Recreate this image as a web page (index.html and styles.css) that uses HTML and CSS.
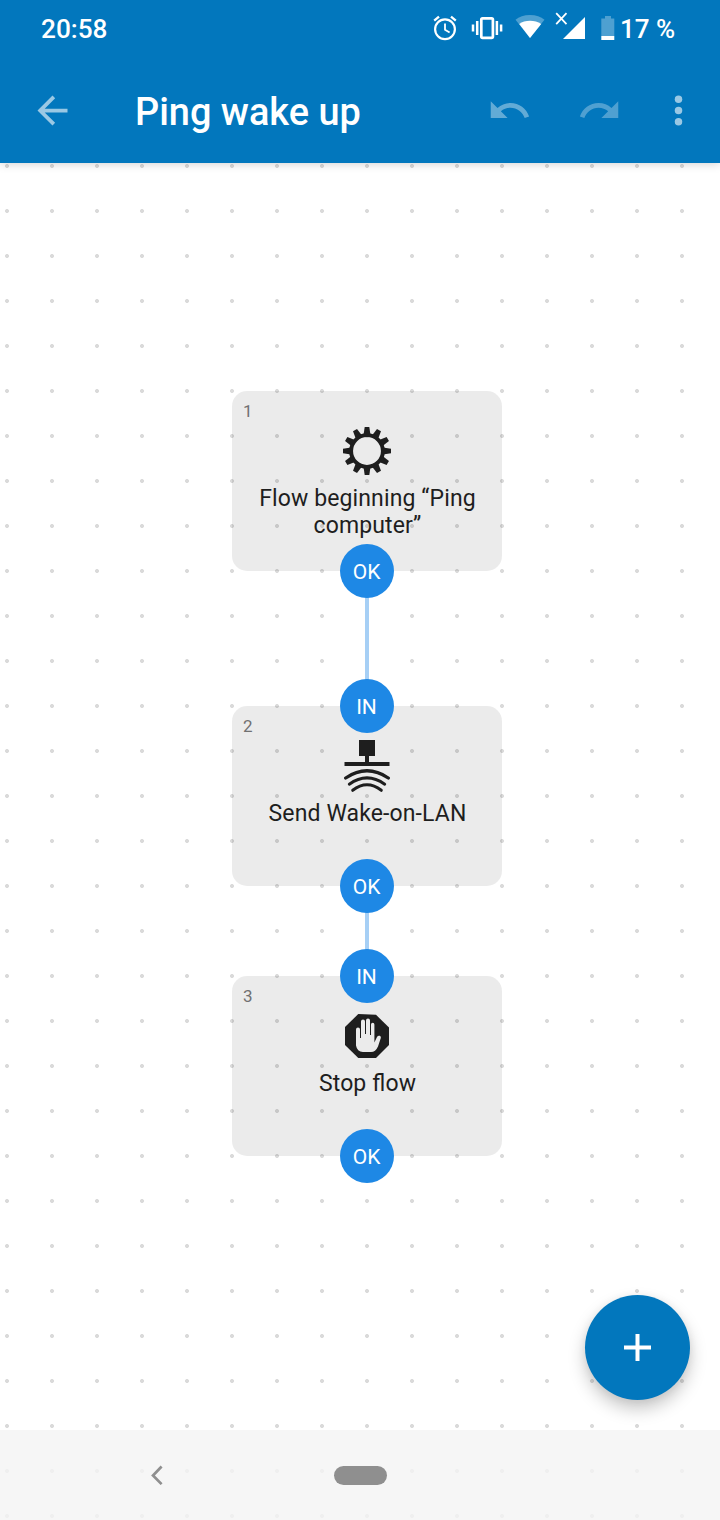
FILE: index.html
```html
<!DOCTYPE html>
<html lang="en">
<head>
<meta charset="utf-8">
<title>Ping wake up</title>
<link rel="stylesheet" href="styles.css">
</head>
<body>
<div class="screen">
  <header class="header">
    <div class="status">
      <span class="clock">20:58</span>
      <div class="indicators">
        <svg class="alarm" width="24" height="26" viewBox="0 0 24 26" fill="none" stroke="#fff" stroke-width="2.2"><circle cx="12" cy="14.2" r="9.9"/><path d="M12 8.5v6.2l4.6 2.8" stroke-width="1.8"/><path d="M1.2 5.7L6 1.6M22.8 5.7L18 1.6" stroke-width="2.3"/></svg>
        <svg class="vibrate" width="32" height="24" viewBox="0 0 32 24" fill="none" stroke="#fff" stroke-width="2.7"><rect x="10.3" y="2.3" width="11.6" height="19.6" rx="1.3"/><path d="M6.2 5v14M2 8.5v7M25.9 5v14M30.1 8.5v7" stroke-width="2.5"/></svg>
        <svg class="wifi" width="30" height="24" viewBox="0 0 30 24"><path d="M15 24L.5 5.7C4 2.8 9 1 15 1s11 1.8 14.500 4.700z" fill="#fff" opacity=".3"/><path d="M15 24L4.200 10C7 8 11 6.800 15 6.800S23 8 26.200 10z" fill="#fff"/></svg>
        <svg class="signal" width="32" height="28" viewBox="0 0 32 28"><path d="M1.200 1.200l10.300 11M11.500 1.200l-10.300 11" stroke="#fff" stroke-width="1.800"/><path d="M30 5v22H8z" fill="#fff"/></svg>
        <svg class="battery" width="14" height="24" viewBox="0 0 14 24"><path d="M4 0h6v2.500h3.300V20H.300V2.500H4z" fill="#fff" opacity=".3"/><path d="M.300 20h13v4h-13z" fill="#fff"/></svg>
        <span class="percent">17 %</span>
      </div>
    </div>
    <div class="toolbar">
      <svg class="icon back" viewBox="0 0 24 24"><path d="M20 11H7.830l5.590-5.590L12 4l-8 8 8 8 1.410-1.410L7.830 13H20v-2z"/></svg>
      <h1 class="title">Ping wake up</h1>
      <svg class="icon undo" viewBox="0 0 24 24"><path d="M12.500 8c-2.650 0-5.050.99-6.900 2.600L2 7v9h9l-3.620-3.620c1.390-1.160 3.160-1.880 5.120-1.880 3.540 0 6.550 2.310 7.600 5.500l2.370-.78C21.080 11.030 17.150 8 12.500 8z"/></svg>
      <svg class="icon redo" viewBox="0 0 24 24"><path d="M18.400 10.600C16.550 8.990 14.150 8 11.500 8c-4.650 0-8.580 3.030-9.960 7.220L3.900 16c1.050-3.190 4.050-5.500 7.600-5.500 1.950 0 3.730.72 5.120 1.880L13 16h9V7l-3.600 3.600z"/></svg>
      <svg class="icon more" viewBox="0 0 24 24"><circle cx="12" cy="6" r="2"/><circle cx="12" cy="12" r="2"/><circle cx="12" cy="18" r="2"/></svg>
    </div>
  </header>

  <main class="canvas">
    <div class="wire wire-1"></div>
    <div class="wire wire-2"></div>

    <section class="node node-1">
      <span class="num">1</span>
      <svg class="glyph" width="60" height="60" viewBox="-30 -30 60 60">
        <defs><path id="tooth" d="M-3.500-16L-2.300-24H2.300L3.500-16z"/></defs>
        <circle r="15.900" fill="none" stroke="#1e1e1e" stroke-width="3.900"/>
        <g fill="#1e1e1e">
          <use href="#tooth"/><use href="#tooth" transform="rotate(30)"/><use href="#tooth" transform="rotate(60)"/><use href="#tooth" transform="rotate(90)"/><use href="#tooth" transform="rotate(120)"/><use href="#tooth" transform="rotate(150)"/><use href="#tooth" transform="rotate(180)"/><use href="#tooth" transform="rotate(210)"/><use href="#tooth" transform="rotate(240)"/><use href="#tooth" transform="rotate(270)"/><use href="#tooth" transform="rotate(300)"/><use href="#tooth" transform="rotate(330)"/>
        </g>
      </svg>
      <p class="label">Flow beginning “Ping<br>computer”</p>
      <span class="port out">OK</span>
    </section>

    <section class="node node-2">
      <span class="num">2</span>
      <svg class="glyph" width="60" height="60" viewBox="0 0 60 60">
        <path d="M22 4h16v16h-6v6h20.500v4H7.500v-4H28v-6h-6z" fill="#1e1e1e"/>
        <g fill="none" stroke="#1e1e1e" stroke-linecap="round">
          <path d="M8.700 42Q30 27.600 51.300 42" stroke-width="3.300"/>
          <path d="M12.300 48.200Q30 35.600 47.700 48.200" stroke-width="3"/>
          <path d="M15.700 54.300Q30 43.300 44.300 54.300" stroke-width="3"/>
        </g>
      </svg>
      <p class="label">Send Wake-on-LAN</p>
      <span class="port in">IN</span>
      <span class="port out">OK</span>
    </section>

    <section class="node node-3">
      <span class="num">3</span>
      <svg class="glyph" width="60" height="60" viewBox="0 0 60 60">
        <path d="M21.300 8L39 8.800L52 21.500V39L39 52H21.300L8 39V21z" fill="#1e1e1e"/>
        <path d="M19 23.500a2 2 0 0 1 4 0V32h1V15.500a2 2 0 0 1 4 0V28h1V14.500a2 2 0 0 1 4 0V29h1V18.500a1.700 1.700 0 0 1 3.400 0V36.500L40 31q1-1.700 2.800-1.200 1.500.7 1 2.200L41 40.500Q38.500 46 34 46H26Q20 45.500 19 39.500z" fill="#ebebeb"/>
      </svg>
      <p class="label">Stop flow</p>
      <span class="port in">IN</span>
      <span class="port out">OK</span>
    </section>

    <div class="fab"><svg width="27" height="27" viewBox="0 0 27 27"><path d="M13.500 0v27M0 13.500h27" stroke="#fff" stroke-width="4"/></svg></div>
    <nav class="navbar">
      <svg class="nav-back" width="12" height="20" viewBox="0 0 12 20"><path d="M10.600 1.500L2 10.500l8.600 8.600" fill="none" stroke="#8f8f8f" stroke-width="2.700"/></svg>
      <span class="pill"></span>
    </nav>
  </main>
</div>
</body>
</html>
```
FILE: styles.css
```css
* { box-sizing: border-box; }
body { margin: 0; background: #fff; font-family: Roboto, "Liberation Sans", sans-serif; }
.screen { width: 720px; height: 1520px; display: flex; flex-direction: column; overflow: hidden; }

.header { height: 163px; flex: none; background: #0277bd; color: #fff; box-shadow: 0 1px 9px rgba(0,0,0,.18); z-index: 1; }
.status { height: 58px; display: flex; justify-content: space-between; padding: 0 45px 0 41px; font-size: 26.2px; font-weight: 500; line-height: 58px; }
.indicators { display: flex; align-items: flex-start; }
.indicators svg { flex: none; }
.alarm { margin-top: 15px; }
.vibrate { margin: 16px 0 0 14px; }
.wifi { margin: 14px 0 0 12px; }
.signal { margin: 12px 0 0 10px; }
.battery { margin: 16px 0 0 14px; }
.percent { margin-left: 5px; width: 55px; white-space: nowrap; font-size: 26px; }

.toolbar { height: 105px; display: flex; align-items: center; padding: 0 19px 0 30px; }
.icon { width: 45px; height: 45px; flex: none; fill: #fff; }
.back, .more { opacity: .6; }
.title { margin: 4px 0 0 60px; flex: 1; font-size: 37.9px; font-weight: 500; line-height: 45px; white-space: nowrap; }
.undo { opacity: .38; margin-right: 45px; }
.redo { opacity: .3; margin-right: 34px; }

.canvas { flex: 1; position: relative; background: radial-gradient(circle at 7px 3px, #dadada 1.600px, transparent 2.300px) 0 0 / 45px 45px #fff; }
.wire { position: absolute; left: 365px; width: 4px; background: #a6cff5; }
.wire-1 { top: 430px; height: 90px; }
.wire-2 { top: 745px; height: 50px; }

.node { position: absolute; left: 232px; width: 270px; height: 180px; border-radius: 15px; background: rgba(0,0,0,.08); display: flex; flex-direction: column; align-items: center; padding-top: 30px; }
.node-1 { top: 228px; }
.node-2 { top: 543px; }
.node-3 { top: 813px; }
.num { position: absolute; left: 11px; top: 10px; font-size: 17px; line-height: 20px; color: #717171; }
.glyph { flex: none; }
.label { margin: 4px 0 0; padding-left: 1px; font-size: 23px; line-height: 27px; text-align: center; color: #1e1e1e; white-space: nowrap; letter-spacing: .12px; font-variant-ligatures: common-ligatures; font-feature-settings: "liga" 1; }
.port { position: absolute; left: 108px; width: 54px; height: 54px; padding-right: 1px; border-radius: 50%; background: #1e88e5; color: #fff; font-size: 21px; line-height: 56px; text-align: center; }
.in { top: -27px; }
.out { bottom: -27px; }

.fab { position: absolute; left: 585px; top: 1132px; width: 105px; height: 105px; border-radius: 50%; background: #0277bd; display: grid; place-items: center; box-shadow: 0 9px 17px rgba(0,0,0,.22), 0 1px 8px rgba(0,0,0,.06); }
.navbar { position: absolute; left: 0; right: 0; bottom: 0; height: 90px; background: rgba(244,244,244,.8); display: flex; align-items: center; padding-left: 151px; }
.pill { width: 53px; height: 19px; border-radius: 10px; background: #8f8f8f; margin-left: 171px; }
```
